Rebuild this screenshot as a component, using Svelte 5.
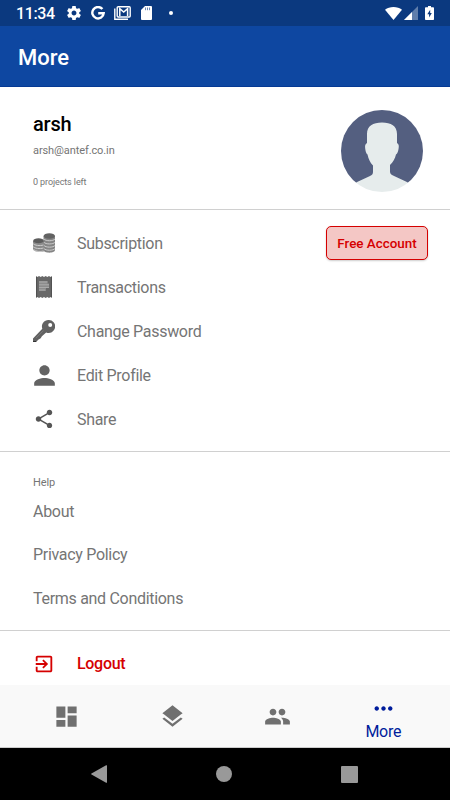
<script>
  const menu = [
    { icon: "coins", label: "Subscription" },
    { icon: "receipt", label: "Transactions" },
    { icon: "key", label: "Change Password" },
    { icon: "person", label: "Edit Profile" },
    { icon: "share", label: "Share" },
  ];

  const help = ["About", "Privacy Policy", "Terms and Conditions"];

  const tabs = [
    { name: "Dashboard", path: "M3 13h8V3H3v10zm0 8h8v-6H3v6zm10 0h8V11h-8v10zm0-18v6h8V3h-8z" },
    { name: "Layers", path: "M11.99 18.54l-7.37-5.73L3 14.07l9 7 9-7-1.63-1.27-7.38 5.74zM12 16l7.36-5.73L21 9l-9-7-9 7 1.63 1.27L12 16z" },
    { name: "People", path: "M16 11c1.66 0 2.99-1.34 2.99-3S17.66 5 16 5s-3 1.34-3 3 1.34 3 3 3zm-8 0c1.66 0 2.99-1.34 2.99-3S9.66 5 8 5 5 6.34 5 8s1.34 3 3 3zm0 2c-2.33 0-7 1.17-7 3.5V19h14v-2.5c0-2.33-4.67-3.5-7-3.5zm8 0c-.29 0-.62.02-.97.05 1.16.84 1.97 1.97 1.97 3.45V19h6v-2.5c0-2.33-4.67-3.5-7-3.5z" },
    { name: "More", label: "More", path: "M6 10c-1.1 0-2 .9-2 2s.9 2 2 2 2-.9 2-2-.9-2-2-2zm12 0c-1.1 0-2 .9-2 2s.9 2 2 2 2-.9 2-2-.9-2-2-2zm-6 0c-1.1 0-2 .9-2 2s.9 2 2 2 2-.9 2-2-.9-2-2-2z" },
  ];
</script>

<div class="screen">
  <div class="status">
    <span class="time">11:34</span>
    <svg class="gear" viewBox="2 2 20 20" width="14" height="14">
      <path d="M19.43 12.98c.04-.32.07-.64.07-.98s-.03-.66-.07-.98l2.11-1.65c.19-.15.24-.42.12-.64l-2-3.46c-.12-.22-.39-.3-.61-.22l-2.49 1c-.52-.4-1.08-.73-1.69-.98l-.38-2.65C14.46 2.18 14.25 2 14 2h-4c-.25 0-.46.18-.49.42l-.38 2.65c-.61.25-1.17.59-1.69.98l-2.49-1c-.23-.09-.49 0-.61.22l-2 3.46c-.13.22-.07.49.12.64l2.11 1.65c-.04.32-.07.65-.07.98s.03.66.07.98l-2.11 1.65c-.19.15-.24.42-.12.64l2 3.46c.12.22.39.3.61.22l2.49-1c.52.4 1.08.73 1.69.98l.38 2.65c.03.24.24.42.49.42h4c.25 0 .46-.18.49-.42l.38-2.65c.61-.25 1.17-.59 1.69-.98l2.49 1c.23.09.49 0 .61-.22l2-3.46c.12-.22.07-.49-.12-.64l-2.11-1.65zM12 15.5c-1.93 0-3.5-1.57-3.5-3.5s1.57-3.5 3.5-3.5 3.5 1.57 3.5 3.5-1.57 3.5-3.5 3.5z" />
    </svg>
    <svg class="google" viewBox="0 0 14 14" width="14" height="14">
      <path d="M11.4 3.1A5.7 5.7 0 1 0 12.7 7.2H7.2" fill="none" stroke="#fff" stroke-width="2.4" />
    </svg>
    <svg class="mail" viewBox="0 0 17 14" width="17" height="14">
      <path d="M.8 2.5V13.2H14" fill="none" stroke="#fff" stroke-width="1.4" />
      <rect x="3.2" y=".7" width="13" height="10.3" rx="1" fill="none" stroke="#fff" stroke-width="1.4" />
      <path d="M5.8 10V2.6L9.7 6l3.9-3.4V10" fill="none" stroke="#fff" stroke-width="1.5" />
    </svg>
    <svg class="sd" viewBox="0 0 11 14" width="11" height="14">
      <path d="M4 0h6a1 1 0 0 1 1 1v12a1 1 0 0 1-1 1H1a1 1 0 0 1-1-1V4z" />
      <path d="M4.5 1.5v2.7M6.5 1.5v2.7M8.5 1.5v2.7" stroke="#0b397f" stroke-width=".6" />
    </svg>
    <i class="dot"></i>
    <svg class="wifi" viewBox="0 0 17 13" width="17" height="13">
      <path d="M8.5 13 0 2.8C2.3.9 5.2 0 8.5 0s6.2.9 8.5 2.8z" />
    </svg>
    <svg class="signal" viewBox="0 0 14 14" width="14" height="14">
      <path d="M14 0v14H0z" opacity=".35" />
      <path d="M8 6v8H0z" />
    </svg>
    <svg class="battery" viewBox="0 0 9 14" width="9" height="14">
      <path d="M3 0h3v1.3h2.2a.8.8 0 0 1 .8.8v11.1a.8.8 0 0 1-.8.8H.8a.8.8 0 0 1-.8-.8V2.1a.8.8 0 0 1 .8-.8H3z" />
      <path d="M5.2 3.8 2.3 8.3h1.8v3.2L6.8 7H5.2z" fill="#0b397f" />
    </svg>
  </div>

  <header>More</header>

  <section class="profile">
    <div>
      <h1>arsh</h1>
      <p class="email">arsh@antef.co.in</p>
      <p class="left">0 projects left</p>
    </div>
    <svg class="avatar" viewBox="0 0 82 82" width="82" height="82">
      <clipPath id="round"><circle cx="41" cy="41" r="41" /></clipPath>
      <g clip-path="url(#round)">
        <path d="M0 0h82v73H0z" fill="#545f80" />
        <path d="M26 33V24C26 16 32 12.5 41 12.5S56 16 56 24v9c2 1 2 3 1.6 5.5-.3 2.5-1 5-2.6 6-1 4-3 7.5-6 10.5v6.500c0 2 1 3 3 4L67 72.500V82H15v-9.500L29 66c2-1 3-2 3-4v-6.500c-3-3-4.500-6.500-5.500-11-1.500-1-2-3.500-2.300-6C23.900 36 24 34 26 33z" fill="#e6ecec" />
      </g>
    </svg>
  </section>

  <section class="menu">
    {#each menu as item}
      <div class="row">
        <span class="icon">
          {#if item.icon === "coins"}
            <svg viewBox="0 0 22 20" width="22" height="20">
              <path d="M0 8v8c0 3 10 4 11 2V8z" fill="#8a8a8a" />
              <path d="M10.5 3v14c0 3.500 11.500 3.500 11.500 0V3z" fill="#858585" />
              <path d="M0 10.500c1.500 2 7 2.600 10.500 1.500M0 13.500c1.500 2 7 2.600 10.500 1.500M.5 16.500c2 2 7 2.600 10 1.500" fill="none" stroke="#ccc" />
              <path d="M11 6c1.500 2.300 9.500 2.300 11 0M11 9.200c1.500 2.300 9.500 2.300 11 0M11 12.400c1.500 2.300 9.500 2.300 11 0M11 15.500c1.500 2.300 9.500 2.300 11 0" fill="none" stroke="#ccc" />
              <ellipse cx="5.500" cy="7.700" rx="5.300" ry="2.500" fill="#5c5c5c" />
              <ellipse cx="16.300" cy="3" rx="5.700" ry="2.800" fill="#626262" />
            </svg>
          {:else if item.icon === "receipt"}
            <svg viewBox="0 0 16 22" width="16" height="22">
              <path d="M0 0 1.500 1 3 0l1.700 1L6.300 0 8 1l1.700-1 1.600 1L13 0l1.500 1L16 0v22l-1.500-1-1.500 1-1.700-1-1.600 1L8 21l-1.700 1-1.600-1L3 22l-1.500-1L0 22z" fill="#686868" />
              <path d="M.6 1v20M15.400 1v20" stroke="#505050" />
              <path d="M3 5h8.500v2.500H13V12h-3v3H3z" fill="#8c8c8c" />
              <path d="M3 6h8.500M3 8.800h10M3 11.500h10M3 14h6" stroke="#aaa" />
            </svg>
          {:else if item.icon === "key"}
            <svg viewBox="0 0 22 22" width="22" height="22">
              <path d="M15.500 0a6.500 6.500 0 0 0-6.200 8.700L0 18.500V22h3.200l2-2.200 2.500-1.600 1.200-2 4.300-3.700A6.500 6.500 0 1 0 15.500 0zm1.700 3a2 2 0 1 1 0 4 2 2 0 0 1 0-4z" fill="#626262" fill-rule="evenodd" />
              <path d="m3 18 7.500-7.500" stroke="#777" />
              <path d="M0 21.500h3" stroke="#333" />
            </svg>
          {:else if item.icon === "person"}
            <svg viewBox="0 0 24 24" width="31" height="31">
              <path d="M12 12c2.210 0 4-1.790 4-4s-1.790-4-4-4-4 1.790-4 4 1.790 4 4 4zm0 2c-2.670 0-8 1.340-8 4v2h16v-2c0-2.660-5.330-4-8-4z" fill="#636363" />
            </svg>
          {:else}
            <svg viewBox="0 0 24 24" width="22" height="22">
              <path d="M18 16.080c-.76 0-1.440.3-1.960.77L8.910 12.700c.05-.23.09-.46.09-.7s-.04-.47-.09-.7l7.050-4.110c.54.5 1.250.81 2.040.81 1.660 0 3-1.340 3-3s-1.340-3-3-3-3 1.340-3 3c0 .24.04.47.09.7L8.040 9.810C7.500 9.310 6.790 9 6 9c-1.660 0-3 1.340-3 3s1.340 3 3 3c.79 0 1.500-.31 2.040-.81l7.120 4.160c-.05.21-.08.43-.08.65 0 1.610 1.310 2.920 2.920 2.920s2.920-1.310 2.920-2.920-1.310-2.920-2.920-2.920z" fill="#555" />
            </svg>
          {/if}
        </span>
        <span>{item.label}</span>
        {#if item.icon === "coins"}
          <button>Free Account</button>
        {/if}
      </div>
    {/each}
  </section>

  <section class="help">
    <h2>Help</h2>
    {#each help as link}
      <div class="link">{link}</div>
    {/each}
  </section>

  <section class="logout">
    <span class="icon">
      <svg viewBox="0 0 24 24" width="22" height="22">
        <path d="M10.090 15.590L11.500 17l5-5-5-5-1.410 1.410L12.670 11H3v2h9.670l-2.580 2.590zM19 3H5c-1.110 0-2 .9-2 2v4h2V5h14v14H5v-4H3v4c0 1.100.89 2 2 2h14c1.100 0 2-.9 2-2V5c0-1.100-.9-2-2-2z" fill="#d50000" />
      </svg>
    </span>
    <span>Logout</span>
  </section>

  <nav>
    {#each tabs as tab}
      <div class="tab" class:active={tab.label}>
        <svg viewBox="0 0 24 24" width="27" height="27" aria-label={tab.name}><path d={tab.path} /></svg>
        {#if tab.label}<span>{tab.label}</span>{/if}
      </div>
    {/each}
  </nav>

  <footer>
    <svg viewBox="0 0 16 18" width="16" height="18"><path d="M16 .8v16.400q0 1-.9.500L.5 9.600Q-.3 9 .5 8.400L15.100.3Q16-.2 16 .8z" /></svg>
    <svg viewBox="0 0 16 16" width="16" height="16"><circle cx="8" cy="8" r="8" /></svg>
    <svg viewBox="0 0 17 17" width="17" height="17"><rect width="17" height="17" rx="1" /></svg>
  </footer>
</div>

<style>
  :global(body) {
    margin: 0;
  }
  .screen {
    display: flex;
    flex-direction: column;
    width: 450px;
    height: 800px;
    overflow: hidden;
    background: #fff;
    color: #757575;
    font-family: Roboto, sans-serif;
    font-size: 16px;
    letter-spacing: -0.3px;
  }
  .screen > * {
    box-sizing: border-box;
    flex-shrink: 0;
  }
  svg {
    display: block;
    flex-shrink: 0;
  }
  h1, h2, p {
    margin: 0;
  }

  .status {
    display: flex;
    align-items: center;
    height: 26px;
    padding: 0 16px;
    background: #0b397f;
    color: #fff;
    fill: #fff;
  }
  .time {
    width: 51px;
    padding-top: 1px;
    font-weight: 500;
    letter-spacing: -0.4px;
  }
  .google {
    margin-left: 10px;
  }
  .mail {
    margin-left: 9px;
  }
  .sd {
    margin-left: 10px;
  }
  .dot {
    width: 4px;
    height: 4px;
    margin-left: 17px;
    border-radius: 50%;
    background: #fff;
  }
  .wifi {
    margin-left: auto;
  }
  .signal {
    margin-left: 2px;
  }
  .battery {
    margin-left: 7px;
  }

  header {
    height: 61px;
    padding-left: 18px;
    border-bottom: 1px solid #063a94;
    background: #0e47a1;
    color: #fff;
    font-size: 22px;
    font-weight: 500;
    letter-spacing: 0;
    line-height: 64px;
  }

  .profile {
    display: flex;
    justify-content: space-between;
    height: 123px;
    padding: 23px 27px 0 33px;
    border-bottom: 1px solid #d0d0d0;
    letter-spacing: -0.1px;
  }
  h1 {
    color: #000;
    font-size: 20px;
    font-weight: 500;
    letter-spacing: -0.2px;
    line-height: 28px;
  }
  .email {
    margin-top: 5px;
    font-size: 11px;
    line-height: 16px;
  }
  .left {
    margin-top: 16px;
    font-size: 9px;
    line-height: 14px;
  }

  .menu {
    height: 242px;
    padding-top: 11px;
    border-bottom: 1px solid #d0d0d0;
  }
  .row,
  .logout {
    display: flex;
    align-items: center;
    height: 44px;
    padding: 0 22px 0 28px;
  }
  .icon {
    display: flex;
    justify-content: center;
    width: 32px;
    margin-right: 17px;
  }
  button {
    width: 102px;
    height: 34px;
    margin-left: auto;
    padding: 0;
    border: 1px solid #d50000;
    border-radius: 5px;
    background: #f4c7c5;
    box-shadow: 0 1px 2px rgba(0, 0, 0, 0.2);
    color: #d50000;
    font-family: inherit;
    font-size: 13.4px;
    font-weight: 500;
    letter-spacing: 0;
  }

  .help {
    height: 179px;
    padding: 23px 33px 0;
    border-bottom: 1px solid #d0d0d0;
  }
  h2 {
    font-size: 11px;
    font-weight: 400;
    letter-spacing: -0.1px;
    line-height: 16px;
  }
  .link {
    height: 43.4px;
    line-height: 41px;
  }

  .logout {
    height: 54px;
    padding-top: 11px;
    font-weight: 500;
    color: #d50000;
  }

  nav {
    display: flex;
    height: 63px;
    padding: 0 14px;
    border-bottom: 1px solid #ccc;
    background: #f9f9f9;
    fill: #707070;
  }
  .tab {
    display: flex;
    flex: 1;
    flex-direction: column;
    align-items: center;
    justify-content: center;
  }
  .active {
    padding-top: 3px;
    color: #001d9c;
    fill: #001d9c;
    line-height: 19px;
  }

  footer {
    display: flex;
    flex: 1;
    align-items: center;
    justify-content: space-between;
    padding: 0 92px 0 91px;
    background: #000;
    fill: #999;
  }
</style>
